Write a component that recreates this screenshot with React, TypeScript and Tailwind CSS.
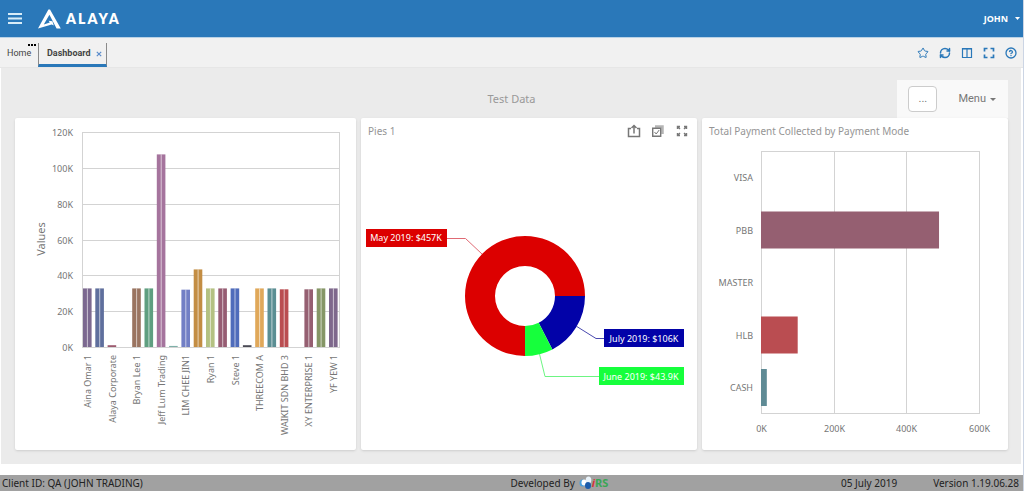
import React from "react";
import { CircleHelp, RefreshCw, Star } from "lucide-react";

interface ClientBar {
  name?: string;
  value: number;
  color: string;
}

interface PaymentBar {
  mode: string;
  value: number;
  color: string;
}

const clients: ClientBar[] = [
  { name: "Aina Omar 1", value: 32.7, color: "#7b688f" },
  { value: 32.7, color: "#5f6f9d" },
  { name: "Alaya Corporate", value: 1, color: "#9d5a6f" },
  { value: 0, color: "#859666" },
  { name: "Bryan Lee 1", value: 32.7, color: "#9a7460" },
  { value: 32.7, color: "#5f9f80" },
  { name: "Jeff Lum Trading", value: 107.5, color: "#a5749d" },
  { value: 0.6, color: "#7fb0a8" },
  { name: "LIM CHEE JIN1", value: 32, color: "#727fc5" },
  { value: 43.3, color: "#c38d43" },
  { name: "Ryan 1", value: 32.7, color: "#b4c182" },
  { value: 32.7, color: "#965c72" },
  { name: "Steve 1", value: 32.7, color: "#4f6cbb" },
  { value: 1, color: "#4a4a55" },
  { name: "THREECOM A", value: 32.7, color: "#e0a85a" },
  { value: 32.7, color: "#5b8e93" },
  { name: "WAIKIT SDN BHD 3", value: 32.2, color: "#ba4d51" },
  { value: 0, color: "#859666" },
  { name: "XY ENTERPRISE 1", value: 32.2, color: "#955f71" },
  { value: 32.7, color: "#859666" },
  { name: "YF YEW 1", value: 32.7, color: "#7e688c" },
];

const payments: PaymentBar[] = [
  { mode: "VISA", value: 0, color: "#859666" },
  { mode: "PBB", value: 490, color: "#955f71" },
  { mode: "MASTER", value: 0, color: "#859666" },
  { mode: "HLB", value: 101, color: "#ba4d51" },
  { mode: "CASH", value: 16, color: "#5f8b95" },
];

const ExpandIcon: React.FC<{ className?: string }> = ({ className }) => (
  <svg viewBox="0 0 12 12" className={className} fill="none" stroke="currentColor" strokeWidth="1.7">
    <path d="M1.500 4.500v-3h3M7.500 1.500h3v3M10.500 7.500v3h-3M4.500 10.500h-3v-3" />
  </svg>
);

const ColumnsIcon: React.FC<{ className?: string }> = ({ className }) => (
  <svg viewBox="0 0 12 12" className={className} fill="none" stroke="currentColor" strokeWidth="1.2">
    <path d="M1.500 1.500h9v9h-9zM6 1.500v9" />
    <path d="M1 1.800h10" strokeWidth="1.500" />
  </svg>
);

const Header: React.FC = () => (
  <header className="flex h-[37px] items-center justify-between bg-[#2a78b9] text-white">
    <div className="flex items-center">
      <button type="button" aria-label="Toggle navigation" className="ml-2">
        <svg viewBox="0 0 14 11" className="h-[11px] w-[14px]" stroke="#d9edf8" strokeWidth="2">
          <path d="M0 1h14M0 5.500h14M0 10h14" />
        </svg>
      </button>
      <a href="#" className="ml-4 flex items-center gap-1">
        <svg viewBox="0 0 24 20" className="h-5 w-6" fill="#fff">
          <path d="M0 19.5 10.400 0.500h1.600L22.800 19.500h-4.200L11.400 5.800 5.800 15.400l6-1.900-1.200-1.700 3.800.5 1.400 4.300-2.100-1.200L0 19.500z" />
        </svg>
        <span className="font-[Lato,sans-serif] text-[14px] leading-5 font-extrabold tracking-[0.15em]">ALAYA</span>
      </a>
    </div>
    <button type="button" className="mr-[3px] flex items-center gap-[7px] text-[9px] font-bold">
      JOHN
      <svg viewBox="0 0 5 3" className="h-[3px] w-[5px]" fill="#fff">
        <path d="M0 0h5L2.500 3z" />
      </svg>
    </button>
  </header>
);

const TabBar: React.FC = () => (
  <nav className="flex h-[31px] justify-between border-t border-b border-t-[#b9d2e6] border-b-[#e6e6e6] bg-[#f1f1f1] font-[Roboto,sans-serif] text-[9px]">
    <div className="flex items-start pt-[5px]">
      <div className="relative flex h-[22px] items-center pl-[7px]">
        <a href="#" className="w-[31px] text-[#444]">Home</a>
        <span className="absolute top-px right-[2px] flex gap-px">
          <i className="size-[2px] bg-black" />
          <i className="size-[2px] bg-black" />
          <i className="size-[2px] bg-black" />
        </span>
      </div>
      <div className="flex h-6 items-center gap-[5px] border-x border-b-[3px] border-x-[#8a8a8a] border-b-[#2a78b9] pr-1 pl-2">
        <a href="#" className="font-bold text-[#444]">Dashboard</a>
        <button type="button" aria-label="Close Dashboard">
          <svg viewBox="0 0 6 6" className="size-[6px]" stroke="#5b8ccb" strokeWidth="1.200">
            <path d="M.8.800l4.400 4.400M5.200.800L.8 5.200" />
          </svg>
        </button>
      </div>
    </div>
    <div className="flex items-center gap-[10px] pr-[6px] text-[#2a78b9]">
      <button type="button" aria-label="Favourite"><Star className="size-3" /></button>
      <button type="button" aria-label="Refresh"><RefreshCw className="size-3" strokeWidth={3} /></button>
      <button type="button" aria-label="Columns"><ColumnsIcon className="size-3" /></button>
      <button type="button" aria-label="Full screen"><ExpandIcon className="size-3" /></button>
      <button type="button" aria-label="Help"><CircleHelp className="size-3" strokeWidth={2.6} /></button>
    </div>
  </nav>
);

const ClientChart: React.FC = () => {
  const base = 229;
  const unit = 215 / 120;

  return (
    <svg viewBox="0 0 341 332" className="block h-auto w-full" fill="#767676" fontSize="9">
      {[0, 20, 40, 60, 80, 100, 120].map((tick) => {
        const y = Math.round(base - tick * unit) + 0.5;
        return (
          <g key={tick}>
            <path d={`M67 ${y}H325`} stroke="#d3d3d3" />
            <text x="58" y={y + 3} textAnchor="end">{tick}K</text>
          </g>
        );
      })}
      <path d="M67.5 14V230M324.5 14V230" stroke="#d3d3d3" />
      <text transform="translate(30 121) rotate(-90)" textAnchor="middle" fontSize="11">Values</text>
      {clients.map((client, i) => {
        const x = 68 + i * 12.3;
        const height = client.value * unit;
        return (
          <g key={i}>
            <rect x={x} y={base - height} width="8.6" height={height} fill={client.color} />
            {client.value > 2 && (
              <rect x={x + 3.9} y={base - height} width="1" height={height} fill="#fff" opacity="0.6" />
            )}
            {client.name && (
              <text transform={`translate(${x + 8} 237) rotate(-90)`} textAnchor="end">{client.name}</text>
            )}
          </g>
        );
      })}
    </svg>
  );
};

const PieChart: React.FC = () => (
  <svg viewBox="0 0 336 306" className="block h-auto w-full" fill="none" fontSize="9">
    {/* slices */}
    <path d="M164 212A60 60 0 1 1 224 152H194A30 30 0 1 0 164 182z" fill="#dc0000" />
    <path d="M224 152A60 60 0 0 1 191.4 205.4L177.7 178.7A30 30 0 0 0 194 152z" fill="#0202a8" />
    <path d="M191.4 205.4A60 60 0 0 1 164 212V182A30 30 0 0 0 177.7 178.7z" fill="#16ff3c" />

    {/* connectors */}
    <path d="M86 94.500H104.500L121 110" stroke="#e06a74" />
    <path d="M215 182L235 194.500H243" stroke="#4a4ab0" />
    <path d="M178.500 210L184 232.500H238" stroke="#6df583" />

    {/* labels */}
    <rect x="5" y="85" width="81" height="18" fill="#dc0000" />
    <rect x="243" y="185" width="80" height="18" fill="#0202a8" />
    <rect x="238" y="223" width="85" height="18" fill="#16ff3c" />
    <g fill="#fff" textAnchor="middle">
      <text x="45" y="97">May 2019: $457K</text>
      <text x="283" y="198">July 2019: $106K</text>
      <text x="280" y="236">June 2019: $43.9K</text>
    </g>
  </svg>
);

const PaymentChart: React.FC = () => (
  <svg viewBox="0 0 306 306" className="block h-auto w-full" fill="#767676" fontSize="9">
    {[0, 200, 400, 600].map((tick) => {
      const x = Math.round(59 + (tick * 218) / 600) + 0.5;
      return (
        <g key={tick}>
          <path d={`M${x} 7V270`} stroke="#d3d3d3" />
          <text x={x} y="288" textAnchor="middle">{tick}K</text>
        </g>
      );
    })}
    <path d="M59 7.500H278M59 269.500H278" stroke="#d3d3d3" />
    {payments.map((payment, i) => {
      const y = 34 + i * 52.5;
      return (
        <g key={payment.mode}>
          <rect x="59" y={y - 19} width={(payment.value * 218) / 600} height="37" fill={payment.color} />
          <text x="51" y={y + 3} textAnchor="end">{payment.mode}</text>
        </g>
      );
    })}
  </svg>
);

const Card: React.FC<{ title?: string; actions?: React.ReactNode; children: React.ReactNode }> = ({
  title,
  actions,
  children,
}) => (
  <section className="rounded-xs bg-white shadow-sm">
    {title && (
      <div className="flex h-[26px] items-center justify-between pr-2 pl-[7px]">
        <h2 className="text-[10px] text-[#959595]">{title}</h2>
        {actions}
      </div>
    )}
    {children}
  </section>
);

const PieActions: React.FC = () => (
  <div className="flex items-center gap-[10px] text-[#777]">
    <button type="button" aria-label="Export">
      <svg viewBox="0 0 14 14" className="size-[14px]" fill="none" stroke="currentColor" strokeWidth="1.5">
        <path d="M4 4.500H1.500v8h11v-8H10M7 9.500V1.500M4.500 4 7 1.500 9.500 4" />
      </svg>
    </button>
    <button type="button" aria-label="Multi-select">
      <svg viewBox="0 0 14 14" className="size-[14px]" fill="none" stroke="currentColor">
        <path d="M4 2.500H11.500V10" stroke="#b5b5b5" strokeWidth="2.500" />
        <path d="M1.700 4.200h8v8h-8z" strokeWidth="1.400" />
        <path d="M3.500 8l1.700 2 3-4" />
      </svg>
    </button>
    <button type="button" aria-label="Maximize">
      <svg viewBox="0 0 14 14" className="size-[14px]" fill="none" stroke="currentColor" strokeWidth="1.400">
        <path d="M5 2.500H2.500V5M9 2.500h2.500V5M5 11.500H2.500V9M9 11.500h2.500V9M2.500 2.500 5 5M11.500 2.500 9 5M2.500 11.500 5 9M11.500 11.500 9 9" />
      </svg>
    </button>
  </div>
);

const Footer: React.FC = () => (
  <footer className="grid h-4 grid-cols-2 items-center bg-[#a1a1a1] pr-1 pl-[2px] text-[10px] text-[#222]">
    <span>Client ID: QA (JOHN TRADING)</span>
    <div className="flex items-center justify-between">
      <span className="flex items-center gap-1">
        Developed By
        <span className="flex items-center">
          <svg viewBox="0 0 13 14" className="h-[14px] w-[13px]">
            <ellipse cx="3.500" cy="7" rx="3" ry="3.500" fill="#4a9fdc" />
            <ellipse cx="5" cy="6.500" rx="2.500" ry="3" fill="#fff" />
            <ellipse cx="9.500" cy="4" rx="2.800" ry="3.500" fill="#e9f3fa" />
            <ellipse cx="9" cy="9.500" rx="3" ry="3.500" fill="#1c5cab" />
          </svg>
          <b className="text-[11px] text-[#3aa655]"><i className="text-[#d8343c]">i</i>RS</b>
        </span>
      </span>
      <span className="flex gap-9">
        <span>05 July 2019</span>
        <span>Version 1.19.06.28</span>
      </span>
    </div>
  </footer>
);

const App: React.FC = () => (
  <div className="flex min-h-screen flex-col border-r border-[#ccd5e4] bg-white font-['Noto_Sans',sans-serif]">
    <Header />
    <TabBar />
    <main className="mr-[2px] ml-px grow bg-[#ebebeb] pt-3 pr-[13px] pb-[14px] pl-[14px]">
      <div className="grid h-[38px] grid-cols-[1fr_auto_1fr] items-center">
        <h1 className="col-start-2 text-[11px] text-[#999]">Test Data</h1>
        <div className="flex h-[38px] items-center justify-between justify-self-end bg-[#f9f9f9] pr-3 pl-[11px] font-[Roboto,sans-serif] text-[11px] text-[#777]">
          <button type="button" className="h-[26px] w-[29px] rounded-sm border border-[#ccc] bg-white">...</button>
          <button type="button" className="ml-[21px] flex items-center gap-1">
            Menu
            <svg viewBox="0 0 6 3" className="h-[3px] w-[6px]" fill="currentColor">
              <path d="M0 0h6L3 3z" />
            </svg>
          </button>
        </div>
      </div>
      <div className="grid grid-cols-[341fr_336fr_306fr] gap-[5px]">
        <Card>
          <ClientChart />
        </Card>
        <Card title="Pies 1" actions={<PieActions />}>
          <PieChart />
        </Card>
        <Card title="Total Payment Collected by Payment Mode">
          <PaymentChart />
        </Card>
      </div>
    </main>
    <div className="h-[11px]" />
    <Footer />
  </div>
);

export default App;
